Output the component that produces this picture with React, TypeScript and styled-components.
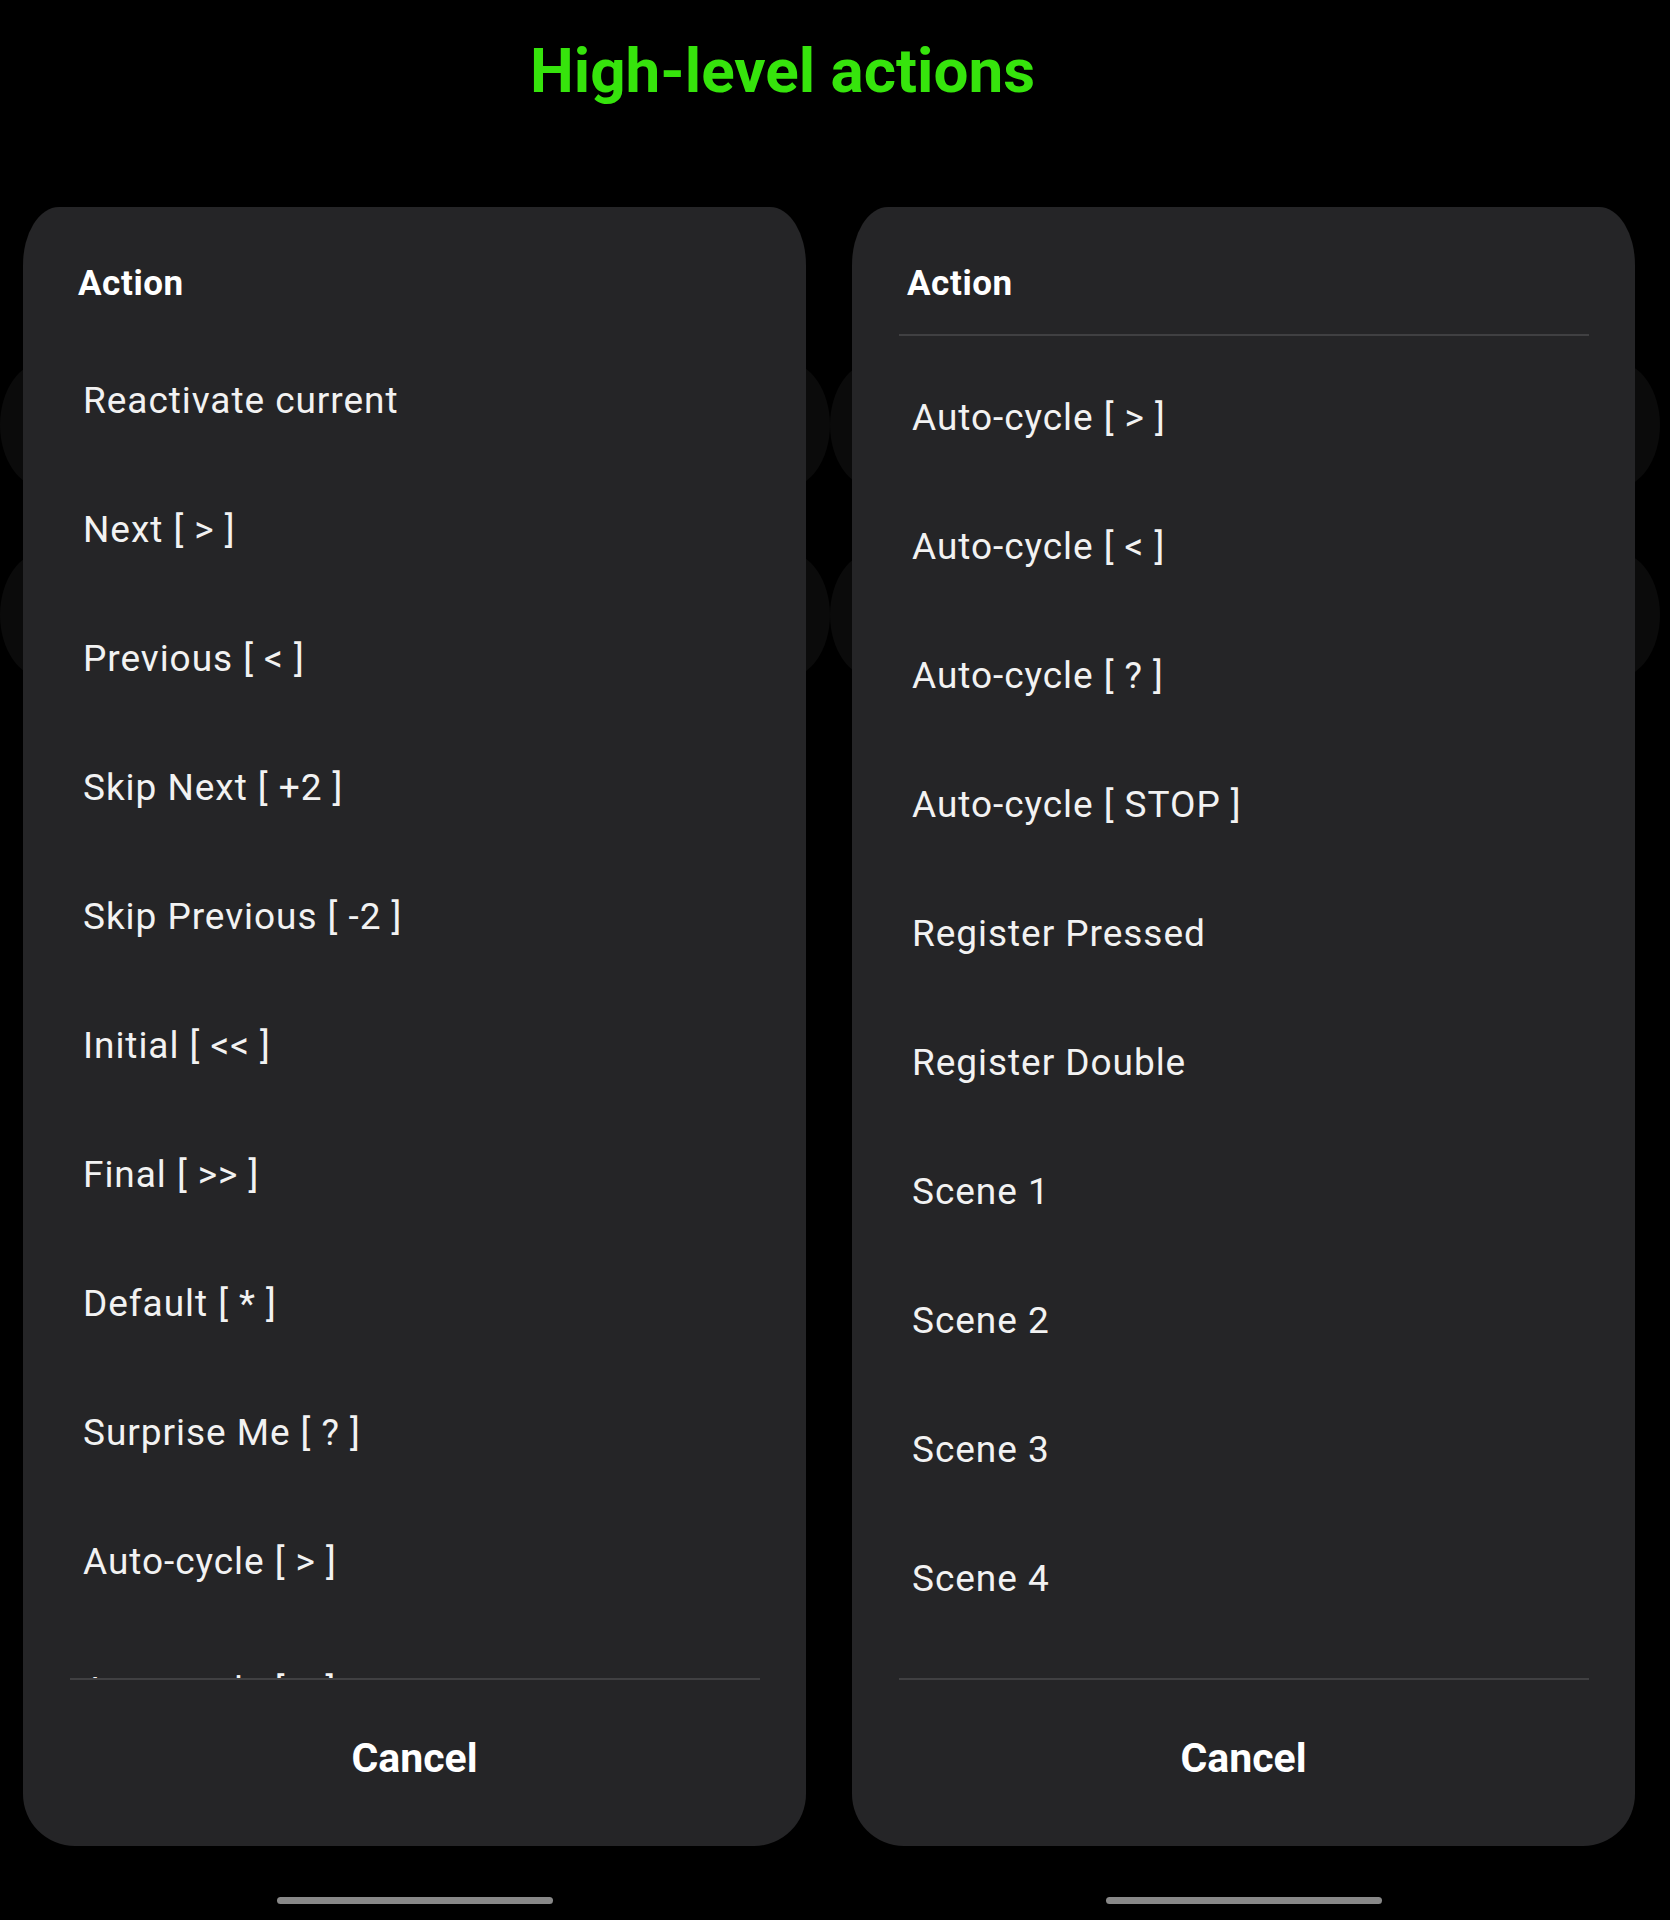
import { createGlobalStyle, styled } from 'styled-components';

const PANEL = '#252527';
const DIVIDER = '#404042';
const GHOST = '#0b0b0b';

const LEFT_ITEMS = [
  'Reactivate current',
  'Next [ > ]',
  'Previous [ < ]',
  'Skip Next [ +2 ]',
  'Skip Previous [ -2 ]',
  'Initial [ << ]',
  'Final [ >> ]',
  'Default [ * ]',
  'Surprise Me [ ? ]',
  'Auto-cycle [ > ]',
  'Auto-cycle [ < ]',
];

const RIGHT_ITEMS = [
  'Auto-cycle [ > ]',
  'Auto-cycle [ < ]',
  'Auto-cycle [ ? ]',
  'Auto-cycle [ STOP ]',
  'Register Pressed',
  'Register Double',
  'Scene 1',
  'Scene 2',
  'Scene 3',
  'Scene 4',
];

type DialogProps = {
  items: string[];
  // left list sits at the top, right one is scrolled to its end
  scrolled: boolean;
};

const ActionDialog = ({ items, scrolled }: DialogProps) => (
  <Panel>
    <Header>Action</Header>
    <Divider $visible={scrolled} />
    <List>
      <ListInner $offset={scrolled ? 17 : 0}>
        {items.map((item, index) => (
          <Row key={index}>{item}</Row>
        ))}
      </ListInner>
    </List>
    <Divider $visible />
    <Footer>
      <CancelButton>Cancel</CancelButton>
    </Footer>
  </Panel>
);

const App = () => {
  return (
    <Page>
      <GlobalStyle />
      <TitleBar>
        <Title>High-level actions</Title>
      </TitleBar>
      <Stage>
        <GhostLayer>
          <GhostPill />
          <GhostPill />
          <GhostPill />
          <GhostPill />
        </GhostLayer>
        <Columns>
          <ActionDialog items={LEFT_ITEMS} scrolled={false} />
          <ActionDialog items={RIGHT_ITEMS} scrolled />
        </Columns>
      </Stage>
      <NavRow>
        <HomeBar />
        <HomeBar />
      </NavRow>
    </Page>
  );
};

export default App;

const GlobalStyle = createGlobalStyle`
  html, body {
    margin: 0;
    padding: 0;
    background: #000;
  }
  * {
    box-sizing: border-box;
  }
`;

const Page = styled.div`
  width: 1670px;
  min-height: 1920px;
  background: #000;
  font-family: Roboto, 'Liberation Sans', sans-serif;
  color: #f4f4f4;
  overflow: hidden;
`;

const TitleBar = styled.div`
  height: 207px;
  padding: 40px 0 0 530px;
`;

const Title = styled.h1`
  margin: 0;
  font-size: 62px;
  line-height: 62px;
  font-weight: 700;
  color: #36e40c;
  white-space: nowrap;
`;

const Stage = styled.div`
  display: grid;
  grid-template-columns: 1fr;
`;

const GhostLayer = styled.div`
  grid-area: 1 / 1;
  display: grid;
  grid-template-columns: 830px 830px;
  grid-auto-rows: 126px;
  row-gap: 64px;
  align-content: start;
  padding-top: 155px;
`;

const GhostPill = styled.div`
  background: ${GHOST};
  border-radius: 44px / 63px;
`;

const Columns = styled.div`
  grid-area: 1 / 1;
  display: grid;
  grid-template-columns: 783px 783px;
  column-gap: 46px;
  padding-left: 23px;
  z-index: 1;
`;

const Panel = styled.div`
  display: flex;
  flex-direction: column;
  height: 1639px;
  background: ${PANEL};
  border-radius: 36px 36px 52px 52px / 58px 58px 52px 52px;
  overflow: hidden;
`;

const Header = styled.div`
  height: 127px;
  padding: 59px 0 0 55px;
  font-size: 35px;
  line-height: 35px;
  font-weight: 700;
  letter-spacing: 0.6px;
  color: #ffffff;
`;

const Divider = styled.div<{ $visible: boolean }>`
  height: 2px;
  margin: 0 46px 0 47px;
  background: ${({ $visible }) => ($visible ? DIVIDER : 'transparent')};
`;

const List = styled.div`
  height: 1342px;
  overflow: hidden;
`;

const ListInner = styled.div<{ $offset: number }>`
  display: flex;
  flex-direction: column;
  padding-top: ${({ $offset }) => $offset}px;
`;

const Row = styled.div`
  display: flex;
  align-items: center;
  flex-shrink: 0;
  height: 129px;
  padding-left: 60px;
  font-size: 37px;
  letter-spacing: 0.95px;
  color: #f2f2f2;
  white-space: nowrap;
`;

const Footer = styled.div`
  display: flex;
  justify-content: center;
  height: 166px;
  padding-top: 58px;
`;

const CancelButton = styled.div`
  font-size: 41px;
  line-height: 41px;
  font-weight: 700;
  color: #ffffff;
`;

const NavRow = styled.div`
  display: grid;
  grid-template-columns: 783px 783px;
  column-gap: 46px;
  justify-items: center;
  padding: 51px 0 0 23px;
`;

const HomeBar = styled.div`
  width: 276px;
  height: 7px;
  border-radius: 4px;
  background: #888888;
`;
